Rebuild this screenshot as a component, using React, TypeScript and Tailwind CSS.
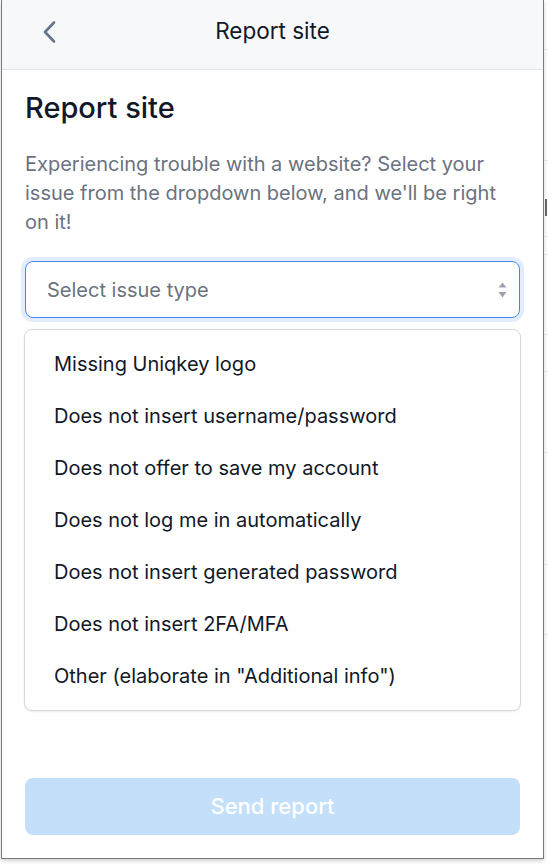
const ISSUES = [
  'Missing Uniqkey logo',
  'Does not insert username/password',
  'Does not offer to save my account',
  'Does not log me in automatically',
  'Does not insert generated password',
  'Does not insert 2FA/MFA',
  'Other (elaborate in "Additional info")',
]

function SortArrows() {
  return (
    <svg width="9" height="16" viewBox="0 0 9 16" className="shrink-0">
      <path d="M4.5 0.5 L8.5 5.5 L0.5 5.5 Z" fill="#9ca3af" />
      <path d="M4.5 15.5 L8.5 10 L0.5 10 Z" fill="#9ca3af" />
    </svg>
  )
}

function BackChevron() {
  return (
    <svg width="14" height="24" viewBox="0 0 14 24" fill="none">
      <path d="M12 2.5 L3 12 L12 21.5" stroke="#64748b" strokeWidth="2.6" strokeLinecap="round" strokeLinejoin="round" />
    </svg>
  )
}

// background page peeking out on the right edge
function BackdropStrip() {
  return (
    <div className="flex-1 flex flex-col overflow-hidden">
      <div className="h-[50px] border-b border-[#e4e4e4]" />
      <div className="h-[111px] border-b border-[#e4e4e4]" />
      <div className="h-[38px]" />
      <div className="h-[17px] w-[2px] ml-[1px] bg-[#666]" />
      <div className="h-[21px] border-b border-[#e4e4e4]" />
      <div className="h-[18px] border-b border-[#e4e4e4]" />
      <div className="h-[80px] border-b border-[#e4e4e4]" />
      <div className="h-[37px] border-b border-[#e4e4e4]" />
      <div className="h-[81px] border-b border-[#e4e4e4]" />
      <div className="h-[112px] border-b border-[#e4e4e4]" />
      <div className="h-[70px] border-b border-[#e4e4e4]" />
    </div>
  )
}

export default function App() {
  return (
    <div className="w-[548px] h-[864px] bg-white flex overflow-hidden font-['Inter',sans-serif]">
      <div className="ml-[1px] w-[543px] h-[859px] shrink-0 flex flex-col bg-white border-l border-r border-b border-[#7a7a7a] shadow-[0_2px_4px_rgba(0,0,0,0.18)]">
        {/* Top bar */}
        <header className="h-[70px] shrink-0 grid grid-cols-[1fr_auto_1fr] items-center bg-[#f7f8fa] border-b border-[#e3e5e8] pb-[7px]">
          <button className="justify-self-start ml-[40px] mt-[2px] flex items-center">
            <BackChevron />
          </button>
          <h1 className="text-[22.5px] leading-[28px] text-[#111827]">Report site</h1>
          <div />
        </header>

        <div className="flex-1 flex flex-col px-[23px] pt-5 pb-[23px]">
          <h2 className="text-[29px] leading-[36px] font-medium text-[#111827]">Report site</h2>
          <p className="mt-6 text-[20px] leading-[29px] text-[#6b7280]">
            Experiencing trouble with a website? Select your issue from the dropdown below, and we'll be right on it!
          </p>

          {/* Select */}
          <div className="mt-6 h-[57px] flex items-center justify-between pl-[21px] pr-[12px] rounded-lg border border-[#4287f5] ring-4 ring-[#e1edfc]">
            <span className="text-[20px] text-[#6b7280]">Select issue type</span>
            <SortArrows />
          </div>

          {/* Options */}
          <ul className="mt-[11px] -mx-[1px] py-2 rounded-lg border border-[#d6d8dc] bg-white shadow-[0_1px_2px_rgba(0,0,0,0.08)]">
            {ISSUES.map((issue) => (
              <li key={issue} className="h-[52px] flex items-center pl-[29px] text-[20px] text-[#111827]">
                {issue}
              </li>
            ))}
          </ul>

          <button className="mt-auto h-[57px] rounded-lg bg-[#c4dffa] text-white text-[22px] font-medium">
            Send report
          </button>
        </div>
      </div>
      <BackdropStrip />
    </div>
  )
}
